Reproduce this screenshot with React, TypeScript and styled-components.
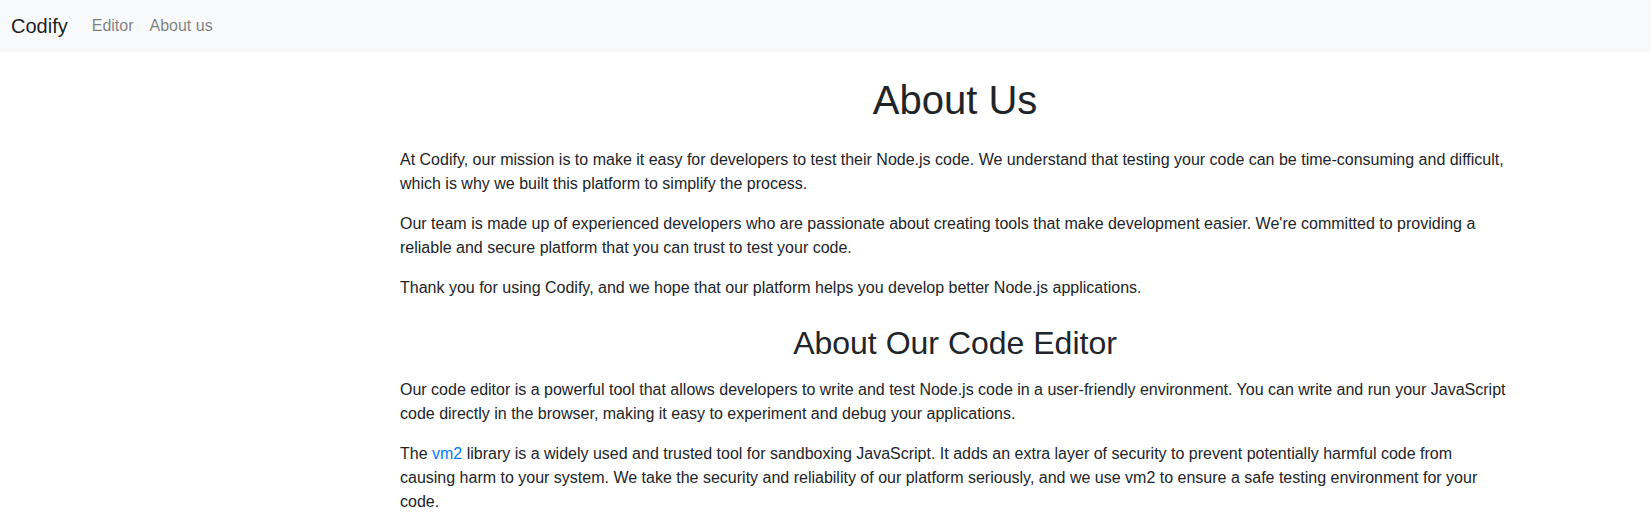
import React from "react";
import styled, { createGlobalStyle } from "styled-components";

const GlobalStyle = createGlobalStyle`
  * { box-sizing: border-box; }
  body {
    margin: 0;
    font-family: "Liberation Sans", Arial, sans-serif;
    font-size: 16px;
    line-height: 1.5;
    color: #212529;
    background: #fff;
  }
`;

const Navbar = styled.nav`
  display: flex;
  align-items: center;
  height: 52px;
  padding: 0 11px;
  background: #f8f9fa;
`;

const Brand = styled.a`
  font-size: 20px;
  line-height: 30px;
  margin-right: 16px;
  color: rgba(0, 0, 0, 0.9);
  text-decoration: none;
`;

const NavList = styled.ul`
  display: flex;
  list-style: none;
  margin: 0;
  padding: 0;
`;

const NavLink = styled.a`
  display: block;
  padding: 0 8px;
  line-height: 24px;
  color: rgba(0, 0, 0, 0.5);
  text-decoration: none;
`;

const Container = styled.main`
  width: 1140px;
  margin-left: 385px;
  padding: 0 15px;
`;

const Title = styled.h1`
  margin: 24px 0 24px;
  font-size: 40px;
  font-weight: 500;
  line-height: 1.2;
  text-align: center;
`;

const Subtitle = styled.h2`
  margin: 24px 0 16px;
  font-size: 32px;
  font-weight: 500;
  line-height: 1.2;
  text-align: center;
`;

const Para = styled.p`
  margin: 0 0 16px;
`;

const Link = styled.a`
  color: #007bff;
  text-decoration: none;
`;

export default function App() {
  return (
    <>
      <GlobalStyle />
      <Navbar>
        <Brand href="#">Codify</Brand>
        <NavList>
          <li><NavLink href="#">Editor</NavLink></li>
          <li><NavLink href="#">About us</NavLink></li>
        </NavList>
      </Navbar>
      <Container>
        <Title>About Us</Title>
        <Para>
          At Codify, our mission is to make it easy for developers to test their Node.js code. We understand that testing your code can be time-consuming and difficult, which is why we built this platform to simplify the process.
        </Para>
        <Para>
          Our team is made up of experienced developers who are passionate about creating tools that make development easier. We're committed to providing a reliable and secure platform that you can trust to test your code.
        </Para>
        <Para>
          Thank you for using Codify, and we hope that our platform helps you develop better Node.js applications.
        </Para>
        <Subtitle>About Our Code Editor</Subtitle>
        <Para>
          Our code editor is a powerful tool that allows developers to write and test Node.js code in a user-friendly environment. You can write and run your JavaScript code directly in the browser, making it easy to experiment and debug your applications.
        </Para>
        <Para>
          The <Link href="#">vm2</Link> library is a widely used and trusted tool for sandboxing JavaScript. It adds an extra layer of security to prevent potentially harmful code from causing harm to your system. We take the security and reliability of our platform seriously, and we use vm2 to ensure a safe testing environment for your code.
        </Para>
      </Container>
    </>
  );
}
